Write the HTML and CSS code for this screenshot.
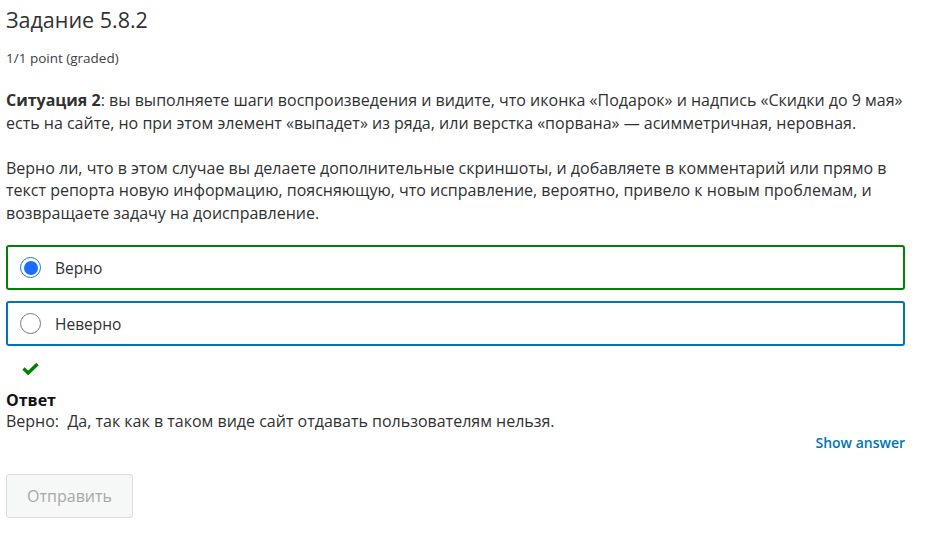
FILE: index.html
```html
<!DOCTYPE html>
<html lang="ru">
<head>
<meta charset="utf-8">
<title>Задание 5.8.2</title>
<link rel="stylesheet" href="styles.css">
</head>
<body>
<div class="problem">
  <h2 class="title">Задание 5.8.2</h2>
  <div class="points">1/1 point (graded)</div>
  <p class="para"><strong>Ситуация 2</strong>: вы выполняете шаги воспроизведения и видите, что иконка «Подарок» и надпись «Скидки до 9 мая» есть на сайте, но при этом элемент «выпадет» из ряда, или верстка «порвана» — асимметричная, неровная.</p>
  <p class="para">Верно ли, что в этом случае вы делаете дополнительные скриншоты, и добавляете в комментарий или прямо в текст репорта новую информацию, поясняющую, что исправление, вероятно, привело к новым проблемам, и возвращаете задачу на доисправление.</p>
  <div class="choices">
    <label class="choice correct"><span class="radio checked"></span><span class="label">Верно</span></label>
    <label class="choice"><span class="radio"></span><span class="label">Неверно</span></label>
  </div>
  <div class="status">
    <svg width="17" height="13" viewBox="0 0 17 13"><path d="M1.5 6.5 L6.2 11 L15.5 2" fill="none" stroke="#008100" stroke-width="3.4"/></svg>
  </div>
  <div class="answer">
    <div class="answer-title">Ответ</div>
    <div class="answer-text">Верно:&nbsp; Да, так как в таком виде сайт отдавать пользователям нельзя.</div>
  </div>
  <div class="actions-top"><span class="show-answer">Show answer</span></div>
  <div class="actions"><button class="submit">Отправить</button></div>
</div>
</body>
</html>
```
FILE: styles.css
```css
html, body {
  margin: 0;
  padding: 0;
  background: #fff;
}
body {
  font-family: "Open Sans", "Noto Sans", sans-serif;
  color: #313131;
}
.problem {
  width: 899px;
  padding: 0 0 0 6px;
}
.title {
  margin: 0;
  padding-top: 6px;
  font-size: 21.5px;
  line-height: 28px;
  font-weight: 400;
  color: #313131;
}
.points {
  margin-top: 15px;
  font-size: 13.5px;
  line-height: 18px;
  color: #414141;
}
.para {
  margin: 0;
  font-size: 16px;
  line-height: 22.5px;
  color: #313131;
}
.para:first-of-type {
  margin-top: 22px;
}
.para + .para {
  margin-top: 22.5px;
}
.para strong {
  font-weight: 700;
}
.choices {
  margin-top: 21px;
  display: flex;
  flex-direction: column;
  gap: 11px;
}
.choice {
  display: flex;
  align-items: center;
  height: 41px;
  border: 2px solid #0075b4;
  border-radius: 3px;
  padding-left: 12px;
  font-size: 15.5px;
  color: #313131;
}
.choice.correct {
  border-color: #008100;
}
.radio {
  width: 21px;
  height: 21px;
  box-sizing: border-box;
  border: 1px solid #767676;
  border-radius: 50%;
  margin-right: 14px;
  display: flex;
  align-items: center;
  justify-content: center;
}
.radio.checked {
  border-color: #1a73e8;
}
.radio.checked::after {
  content: "";
  width: 14px;
  height: 14px;
  border-radius: 50%;
  background: #1a6dff;
}
.label {
  line-height: 20px;
}
.status {
  margin-top: 12px;
  padding-left: 16px;
  height: 16px;
}
.answer {
  margin-top: 16px;
  font-size: 16px;
  line-height: 21px;
}
.answer-title {
  font-weight: 700;
  color: #111;
}
.answer-text {
  color: #313131;
}
.actions-top {
  display: flex;
  justify-content: flex-end;
  margin-top: 1px;
}
.show-answer {
  font-size: 14px;
  font-weight: 600;
  color: #0075b4;
  line-height: 20px;
}
.actions {
  margin-top: 21px;
}
.submit {
  width: 127px;
  height: 44px;
  border: 1px solid #dcdcdc;
  border-radius: 3px;
  background: #f6f7f7;
  color: #a8a8a8;
  font-family: "Open Sans", "Noto Sans", sans-serif;
  font-size: 16px;
}
```
